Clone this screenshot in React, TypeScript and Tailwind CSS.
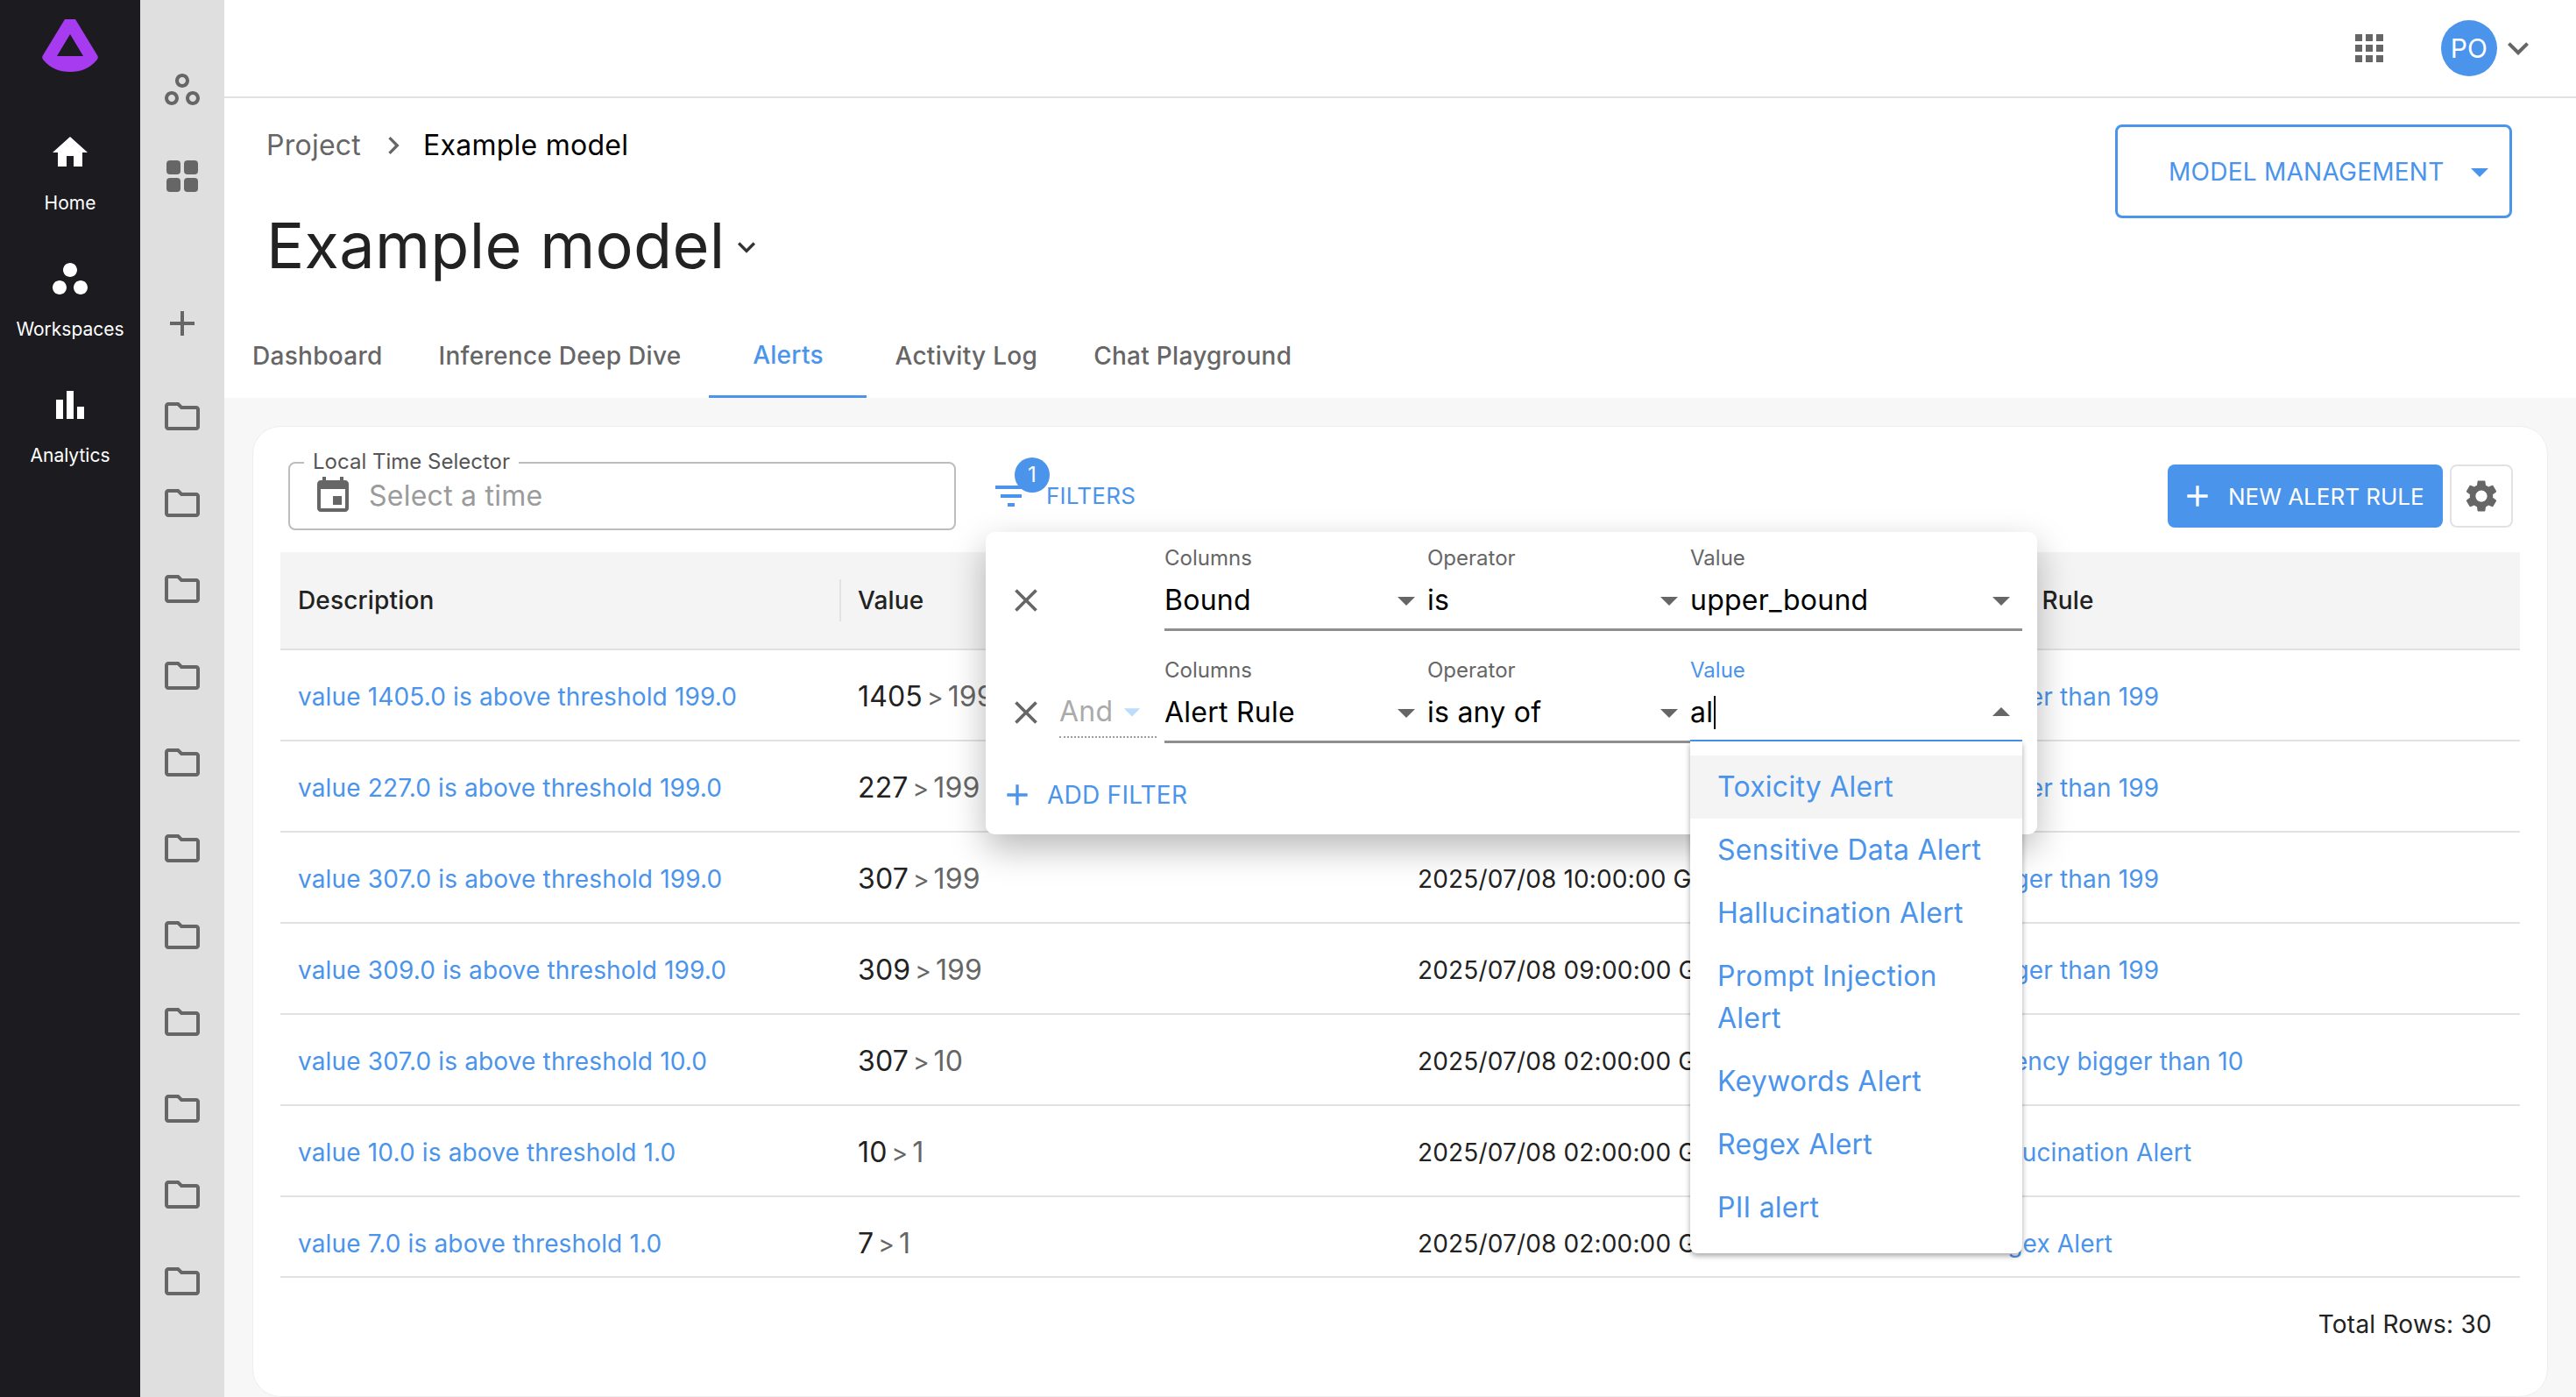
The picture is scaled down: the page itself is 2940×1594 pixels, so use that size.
import React from 'react';

const BLUE = 'text-[#4a94ec]';

function Icon({ d, size = 48, className = '' }: { d: string; size?: number; className?: string }) {
  return (
    <svg width={size} height={size} viewBox="0 0 24 24" fill="currentColor" className={`shrink-0 ${className}`}>
      <path d={d} />
    </svg>
  );
}

const paths = {
  home: 'M10 20v-6h4v6h5v-8h3L12 3 2 12h3v8z',
  workspaces: 'M6 13c-2.2 0-4 1.8-4 4s1.8 4 4 4 4-1.8 4-4-1.8-4-4-4zm12 0c-2.2 0-4 1.8-4 4s1.8 4 4 4 4-1.8 4-4-1.8-4-4-4zm-6-10C9.8 3 8 4.8 8 7s1.8 4 4 4 4-1.8 4-4-1.8-4-4-4z',
  workspacesOutline: 'M6 15c1.1 0 2 .9 2 2s-.9 2-2 2-2-.9-2-2 .9-2 2-2m0-2c-2.2 0-4 1.8-4 4s1.8 4 4 4 4-1.8 4-4-1.8-4-4-4zm6-8c1.1 0 2 .9 2 2s-.9 2-2 2-2-.9-2-2 .9-2 2-2m0-2C9.8 3 8 4.8 8 7s1.8 4 4 4 4-1.8 4-4-1.8-4-4-4zm6 12c1.1 0 2 .9 2 2s-.9 2-2 2-2-.9-2-2 .9-2 2-2m0-2c-2.2 0-4 1.8-4 4s1.8 4 4 4 4-1.8 4-4-1.8-4-4-4z',
  analytics: 'M4 9h4v11H4zM16 13h4v7h-4zM10 4h4v16h-4z',
  add: 'M19 13h-6v6h-2v-6H5v-2h6V5h2v6h6v2z',
  folder: 'M9.17 6l2 2H20v10H4V6h5.17M10 4H4c-1.1 0-1.99.9-1.99 2L2 18c0 1.1.9 2 2 2h16c1.1 0 2-.9 2-2V8c0-1.1-.9-2-2-2h-8l-2-2z',
  calendar: 'M17 12h-5v5h5v-5zM16 1v2H8V1H6v2H5c-1.11 0-1.99.9-1.99 2L3 19c0 1.1.89 2 2 2h14c1.1 0 2-.9 2-2V5c0-1.1-.9-2-2-2h-1V1h-2zm3 18H5V8h14v11z',
  filter: 'M10 18h4v-2h-4v2zM3 6v2h18V6H3zm3 7h12v-2H6v2z',
  apps: 'M4 8h4V4H4v4zm6 12h4v-4h-4v4zm-6 0h4v-4H4v4zm0-6h4v-4H4v4zm6 0h4v-4h-4v4zm6-10v4h4V4h-4zm-6 4h4V4h-4v4zm6 6h4v-4h-4v4zm0 6h4v-4h-4v4z',
  gear: 'M19.14 12.94c.04-.3.06-.61.06-.94 0-.32-.02-.64-.07-.94l2.03-1.58c.18-.14.23-.41.12-.61l-1.92-3.32c-.12-.22-.37-.29-.59-.22l-2.39.96c-.5-.38-1.03-.7-1.62-.94l-.36-2.54c-.04-.24-.24-.41-.48-.41h-3.84c-.24 0-.43.17-.47.41l-.36 2.54c-.59.24-1.13.57-1.62.94l-2.39-.96c-.22-.08-.47 0-.59.22L2.74 8.87c-.12.21-.08.47.12.61l2.03 1.58c-.05.3-.09.63-.09.94s.02.64.07.94l-2.03 1.58c-.18.14-.23.41-.12.61l1.92 3.32c.12.22.37.29.59.22l2.39-.96c.5.38 1.03.7 1.62.94l.36 2.54c.05.24.24.41.48.41h3.84c.24 0 .44-.17.47-.41l.36-2.54c.59-.24 1.13-.56 1.62-.94l2.39.96c.22.08.47 0 .59-.22l1.92-3.32c.12-.22.07-.47-.12-.61l-2.01-1.58zM12 15.6c-1.98 0-3.6-1.62-3.6-3.6s1.62-3.6 3.6-3.6 3.6 1.62 3.6 3.6-1.62 3.6-3.6 3.6z',
  expand: 'M16.59 8.59L12 13.17 7.41 8.59 6 10l6 6 6-6z',
  close: 'M19 6.41L17.59 5 12 10.59 6.41 5 5 6.41 10.59 12 5 17.59 6.41 19 12 13.41 17.59 19 19 17.59 13.41 12z',
  caretDown: 'M7 10l5 5 5-5z',
  caretUp: 'M7 14l5-5 5 5z',
  next: 'M10 6L8.59 7.41 13.17 12l-4.58 4.58L10 18l6-6z',
};

const rows = [
  { desc: 'value 1405.0 is above threshold 199.0', v: '1405', limit: '199', time: '2025/07/08 11:00:00 GMT', rule: 'bigger than 199' },
  { desc: 'value 227.0 is above threshold 199.0', v: '227', limit: '199', time: '2025/07/08 11:00:00 GMT', rule: 'bigger than 199' },
  { desc: 'value 307.0 is above threshold 199.0', v: '307', limit: '199', time: '2025/07/08 10:00:00 GMT', rule: 'bigger than 199' },
  { desc: 'value 309.0 is above threshold 199.0', v: '309', limit: '199', time: '2025/07/08 09:00:00 GMT', rule: 'bigger than 199' },
  { desc: 'value 307.0 is above threshold 10.0', v: '307', limit: '10', time: '2025/07/08 02:00:00 GMT', rule: 'Latency bigger than 10' },
  { desc: 'value 10.0 is above threshold 1.0', v: '10', limit: '1', time: '2025/07/08 02:00:00 GMT', rule: 'Hallucination Alert' },
  { desc: 'value 7.0 is above threshold 1.0', v: '7', limit: '1', time: '2025/07/08 02:00:00 GMT', rule: 'Regex Alert' },
];

const tableCols = 'grid grid-cols-[638px_640px_638px_1fr] items-center';

function NavItem({ d, label, className }: { d: string; label: string; className: string }) {
  return (
    <div className={`flex flex-col items-center text-white ${className}`}>
      <Icon d={d} />
      <span className="mt-[20px] text-[21px] leading-[28px] tracking-normal">{label}</span>
    </div>
  );
}

function Sidebar() {
  return (
    <div className="flex w-[160px] shrink-0 flex-col items-center bg-[#1c1b20]">
      <svg width="64" height="60" viewBox="0 0 64 60" className="mt-[22px] shrink-0">
        <path
          fillRule="evenodd"
          fill="#a63bef"
          d="M26 0H38L63 41Q65 44 62 47Q51 60 32 60Q13 60 2 47Q-1 44 1 41ZM32 17L17 42H47Z"
        />
      </svg>
      <NavItem d={paths.home} label="Home" className="mt-[68px]" />
      <NavItem d={paths.workspaces} label="Workspaces" className="mt-[48px]" />
      <NavItem d={paths.analytics} label="Analytics" className="mt-[48px]" />
    </div>
  );
}

function Rail() {
  return (
    <div className="flex w-[96px] shrink-0 flex-col items-center bg-[#dfdfdf] text-[#666666]">
      <Icon d={paths.workspacesOutline} className="mt-[78px]" />
      <svg width="36" height="36" viewBox="0 0 36 36" fill="currentColor" className="mt-[57px] shrink-0">
        <rect x="0" y="0" width="16" height="16" rx="4" />
        <rect x="20" y="0" width="16" height="16" rx="4" />
        <rect x="0" y="20" width="16" height="16" rx="4" />
        <rect x="20" y="20" width="16" height="16" rx="4" />
      </svg>
      <Icon d={paths.add} className="mt-[126px]" />
      <div className="mt-[58px] flex flex-col gap-[50.7px]">
        {Array.from({ length: 11 }).map((_, i) => (
          <Icon key={i} d={paths.folder} />
        ))}
      </div>
    </div>
  );
}

function TopBar() {
  return (
    <div className="flex h-[112px] shrink-0 items-center justify-end border-b-2 border-[#e2e2e2] bg-white text-[#666666]">
      <Icon d={paths.apps} />
      <div className="ml-[58px] flex h-[64px] w-[64px] items-center justify-center rounded-full bg-[#4a94ec] text-[30px] text-white">
        PO
      </div>
      <Icon d={paths.expand} className="mr-[42px]" />
    </div>
  );
}

function Header() {
  return (
    <div className="relative h-[342px] shrink-0 bg-white">
      <div className="flex items-center pl-[48px] pt-[30px] text-[32px] leading-[48px]">
        <span className="text-[#666666]">Project</span>
        <Icon d={paths.next} size={40} className="ml-[17px] text-[#666666]" />
        <span className="ml-[14px] text-black">Example model</span>
      </div>
      <div className="mt-[45px] flex items-center pl-[48px]">
        <span className="text-[72px] leading-[90px] tracking-[0.3px] text-[#222222]">Example model</span>
        <Icon d={paths.expand} size={40} className="ml-[5px] mt-[4px] text-[#333333]" />
      </div>
      <div className="absolute bottom-0 left-[32px] flex h-[96px] text-[28px] font-medium tracking-[0.28px] text-[#666666]">
        <div className="flex items-center px-0">Dashboard</div>
        <div className="ml-[64px] flex items-center">Inference Deep Dive</div>
        <div className={`ml-[32px] flex w-[180px] items-center justify-center border-b-[3px] border-[#4a94ec] ${BLUE}`}>Alerts</div>
        <div className="ml-[32px] flex items-center">Activity Log</div>
        <div className="ml-[64px] flex items-center">Chat Playground</div>
      </div>
      <div className={`absolute left-[2158px] top-[30px] flex h-[107px] w-[453px] items-center justify-between rounded-[8px] border-[3px] border-[#4a94ec] pl-[58px] pr-[10px] text-[28px] ${BLUE}`}>
        MODEL MANAGEMENT
        <Icon d={paths.caretDown} />
      </div>
    </div>
  );
}

function TimeSelector() {
  return (
    <div className="relative ml-[9px] flex h-[78px] w-[762px] items-center rounded-[8px] border-2 border-[#bdbdbd] pl-[25px]">
      <span className="absolute left-[16px] top-[-14px] bg-white px-[10px] text-[24px] leading-[24px] tracking-normal text-[#555555]">Local Time Selector</span>
      <Icon d={paths.calendar} className="text-[#666666]" />
      <span className="ml-[17px] text-[32px] text-[#9b9b9b]">Select a time</span>
    </div>
  );
}

function Filters() {
  return (
    <div className={`relative ml-[39px] flex h-[78px] items-center ${BLUE}`}>
      <Icon d={paths.filter} />
      <span className="mb-[2px] ml-[16px] text-[26px]">FILTERS</span>
      <span className="absolute left-[28px] top-[-5px] flex h-[40px] w-[40px] items-center justify-center rounded-full bg-[#4a94ec] text-[24px] text-white">1</span>
    </div>
  );
}

function FilterRow({ first, column, op, value }: { first?: boolean; column: string; op: string; value: string }) {
  return (
    <div className={`flex items-end ${first ? 'h-[113px]' : 'h-[128px]'}`}>
      <div className="flex h-[70px] w-[204px] items-center pl-[24px]">
        <Icon d={paths.close} size={44} className="text-[#666666]" />
        {!first && (
          <div className="ml-[16px] flex h-[58px] w-[111px] items-center border-b-2 border-dotted border-[#9e9e9e] text-[32px] text-[#aaaaaa]">
            And
            <Icon d={paths.caretDown} size={44} className="text-[#bbdcfb]" />
          </div>
        )}
      </div>
      <div className="flex w-[979px] flex-col">
        <div className="flex text-[24px] leading-[32px] tracking-normal text-[#666666]">
          <span className="w-[300px]">Columns</span>
          <span className="w-[300px]">Operator</span>
          <span className={first ? '' : BLUE}>Value</span>
        </div>
        <div className="relative mt-[3px] flex h-[64px] items-center border-b-[3px] border-[#8f8f8f] pb-[4px] text-[32px] text-black">
          <div className="flex w-[300px] items-center justify-between">
            {column}
            <Icon d={paths.caretDown} className="text-[#666666]" />
          </div>
          <div className="flex w-[300px] items-center justify-between">
            {op}
            <Icon d={paths.caretDown} className="text-[#666666]" />
          </div>
          <div className="flex flex-1 items-center justify-between">
            <span className="flex items-center">
              {value}
              {!first && <span className="ml-[1px] h-[38px] w-[2px] bg-black" />}
            </span>
            <Icon d={first ? paths.caretDown : paths.caretUp} className="text-[#666666]" />
          </div>
          {!first && <span className="absolute bottom-[-3px] left-[600px] right-0 h-[4px] bg-[#4a94ec]" />}
        </div>
      </div>
    </div>
  );
}

function FilterPanel() {
  return (
    <div className="absolute left-[836px] top-[120px] z-10 h-[345px] w-[1200px] rounded-[10px] bg-white shadow-[0_16px_40px_rgba(0,0,0,0.28)]">
      <FilterRow first column="Bound" op="is" value="upper_bound" />
      <FilterRow column="Alert Rule" op="is any of" value="al" />
      <div className={`mt-[38px] flex items-center pl-[16px] text-[28px] ${BLUE}`}>
        <Icon d={paths.add} size={40} />
        <span className="ml-[14px]">ADD FILTER</span>
      </div>
    </div>
  );
}

function OptionList() {
  const options = ['Toxicity Alert', 'Sensitive Data Alert', 'Hallucination Alert', 'Prompt Injection Alert', 'Keywords Alert', 'Regex Alert', 'PII alert'];
  return (
    <div className="absolute left-[1640px] top-[359px] z-20 w-[379px] rounded-b-[8px] bg-white py-[16px] shadow-[0_3px_6px_rgba(0,0,0,0.35)]">
      {options.map((o, i) => (
        <div key={o} className={`px-[31px] py-[12px] text-[32px] leading-[48px] ${BLUE} ${i === 0 ? 'bg-[#f4f4f4]' : ''}`}>
          {o}
        </div>
      ))}
    </div>
  );
}

function Table() {
  return (
    <div className="mt-[25px] text-[28px] tracking-[0.15px]">
      <div className={`${tableCols} h-[112px] border-b-2 border-[#e2e2e2] bg-[#f4f4f4] font-medium text-[#222222]`}>
        <div className="px-[20px]">Description</div>
        <div className="h-[48px] border-l-2 border-[#e2e2e2] px-[19px] leading-[48px]">Value</div>
        <div className="h-[48px] border-l-2 border-[#e2e2e2] px-[20px] leading-[48px]">Timestamp</div>
        <div className="h-[48px] border-l-2 border-[#e2e2e2] px-[20px] leading-[48px]">Alert Rule</div>
      </div>
      {rows.map((r) => (
        <div key={r.desc} className={`${tableCols} h-[104px] border-b-2 border-[#e2e2e2] pt-[3px] first:h-[106px] last:h-[92px] last:pt-[15px]`}>
          <div className={`px-[20px] ${BLUE}`}>{r.desc}</div>
          <div className="px-[21px] text-[32px] text-[#666666]">
            <span className="text-[#222222]">{r.v}</span>
            <span className="mx-[5px] text-[28px]">&gt;</span>
            {r.limit}
          </div>
          <div className="whitespace-nowrap px-[20px] text-[#222222]">{r.time}</div>
          <div className={`whitespace-nowrap px-[21px] ${BLUE}`}>{r.rule}</div>
        </div>
      ))}
    </div>
  );
}

function Card() {
  return (
    <div className="relative h-full overflow-hidden rounded-[32px] border border-[#eeeeee] bg-white px-[31px] pt-[40px] text-[#222222]">
      <div className="flex h-[78px] items-center">
        <TimeSelector />
        <Filters />
        <div className="flex-1" />
        <div className="flex h-[72px] w-[314px] items-center rounded-[8px] bg-[#4a94ec] pl-[14px] text-[26px] tracking-normal text-white">
          <Icon d={paths.add} size={40} />
          <span className="ml-[15px] whitespace-nowrap">NEW ALERT RULE</span>
        </div>
        <div className="ml-[8px] mr-[8px] flex h-[72px] w-[72px] items-center justify-center rounded-[8px] border-2 border-[#e2e2e2] text-[#666666]">
          <Icon d={paths.gear} size={44} />
        </div>
      </div>
      <Table />
      <div className="mt-[35px] pr-[32px] text-right text-[28px] leading-[36px]">Total Rows: 30</div>
      <FilterPanel />
      <OptionList />
    </div>
  );
}

export default function App() {
  return (
    <div className="flex h-[1594px] w-[2940px] overflow-hidden bg-[#f7f7f7] tracking-[0.25px] [font-family:Inter,sans-serif]">
      <Sidebar />
      <Rail />
      <div className="flex min-w-0 flex-1 flex-col">
        <TopBar />
        <Header />
        <div className="min-h-0 flex-1 px-[32px] pt-[32px]">
          <Card />
        </div>
      </div>
    </div>
  );
}
